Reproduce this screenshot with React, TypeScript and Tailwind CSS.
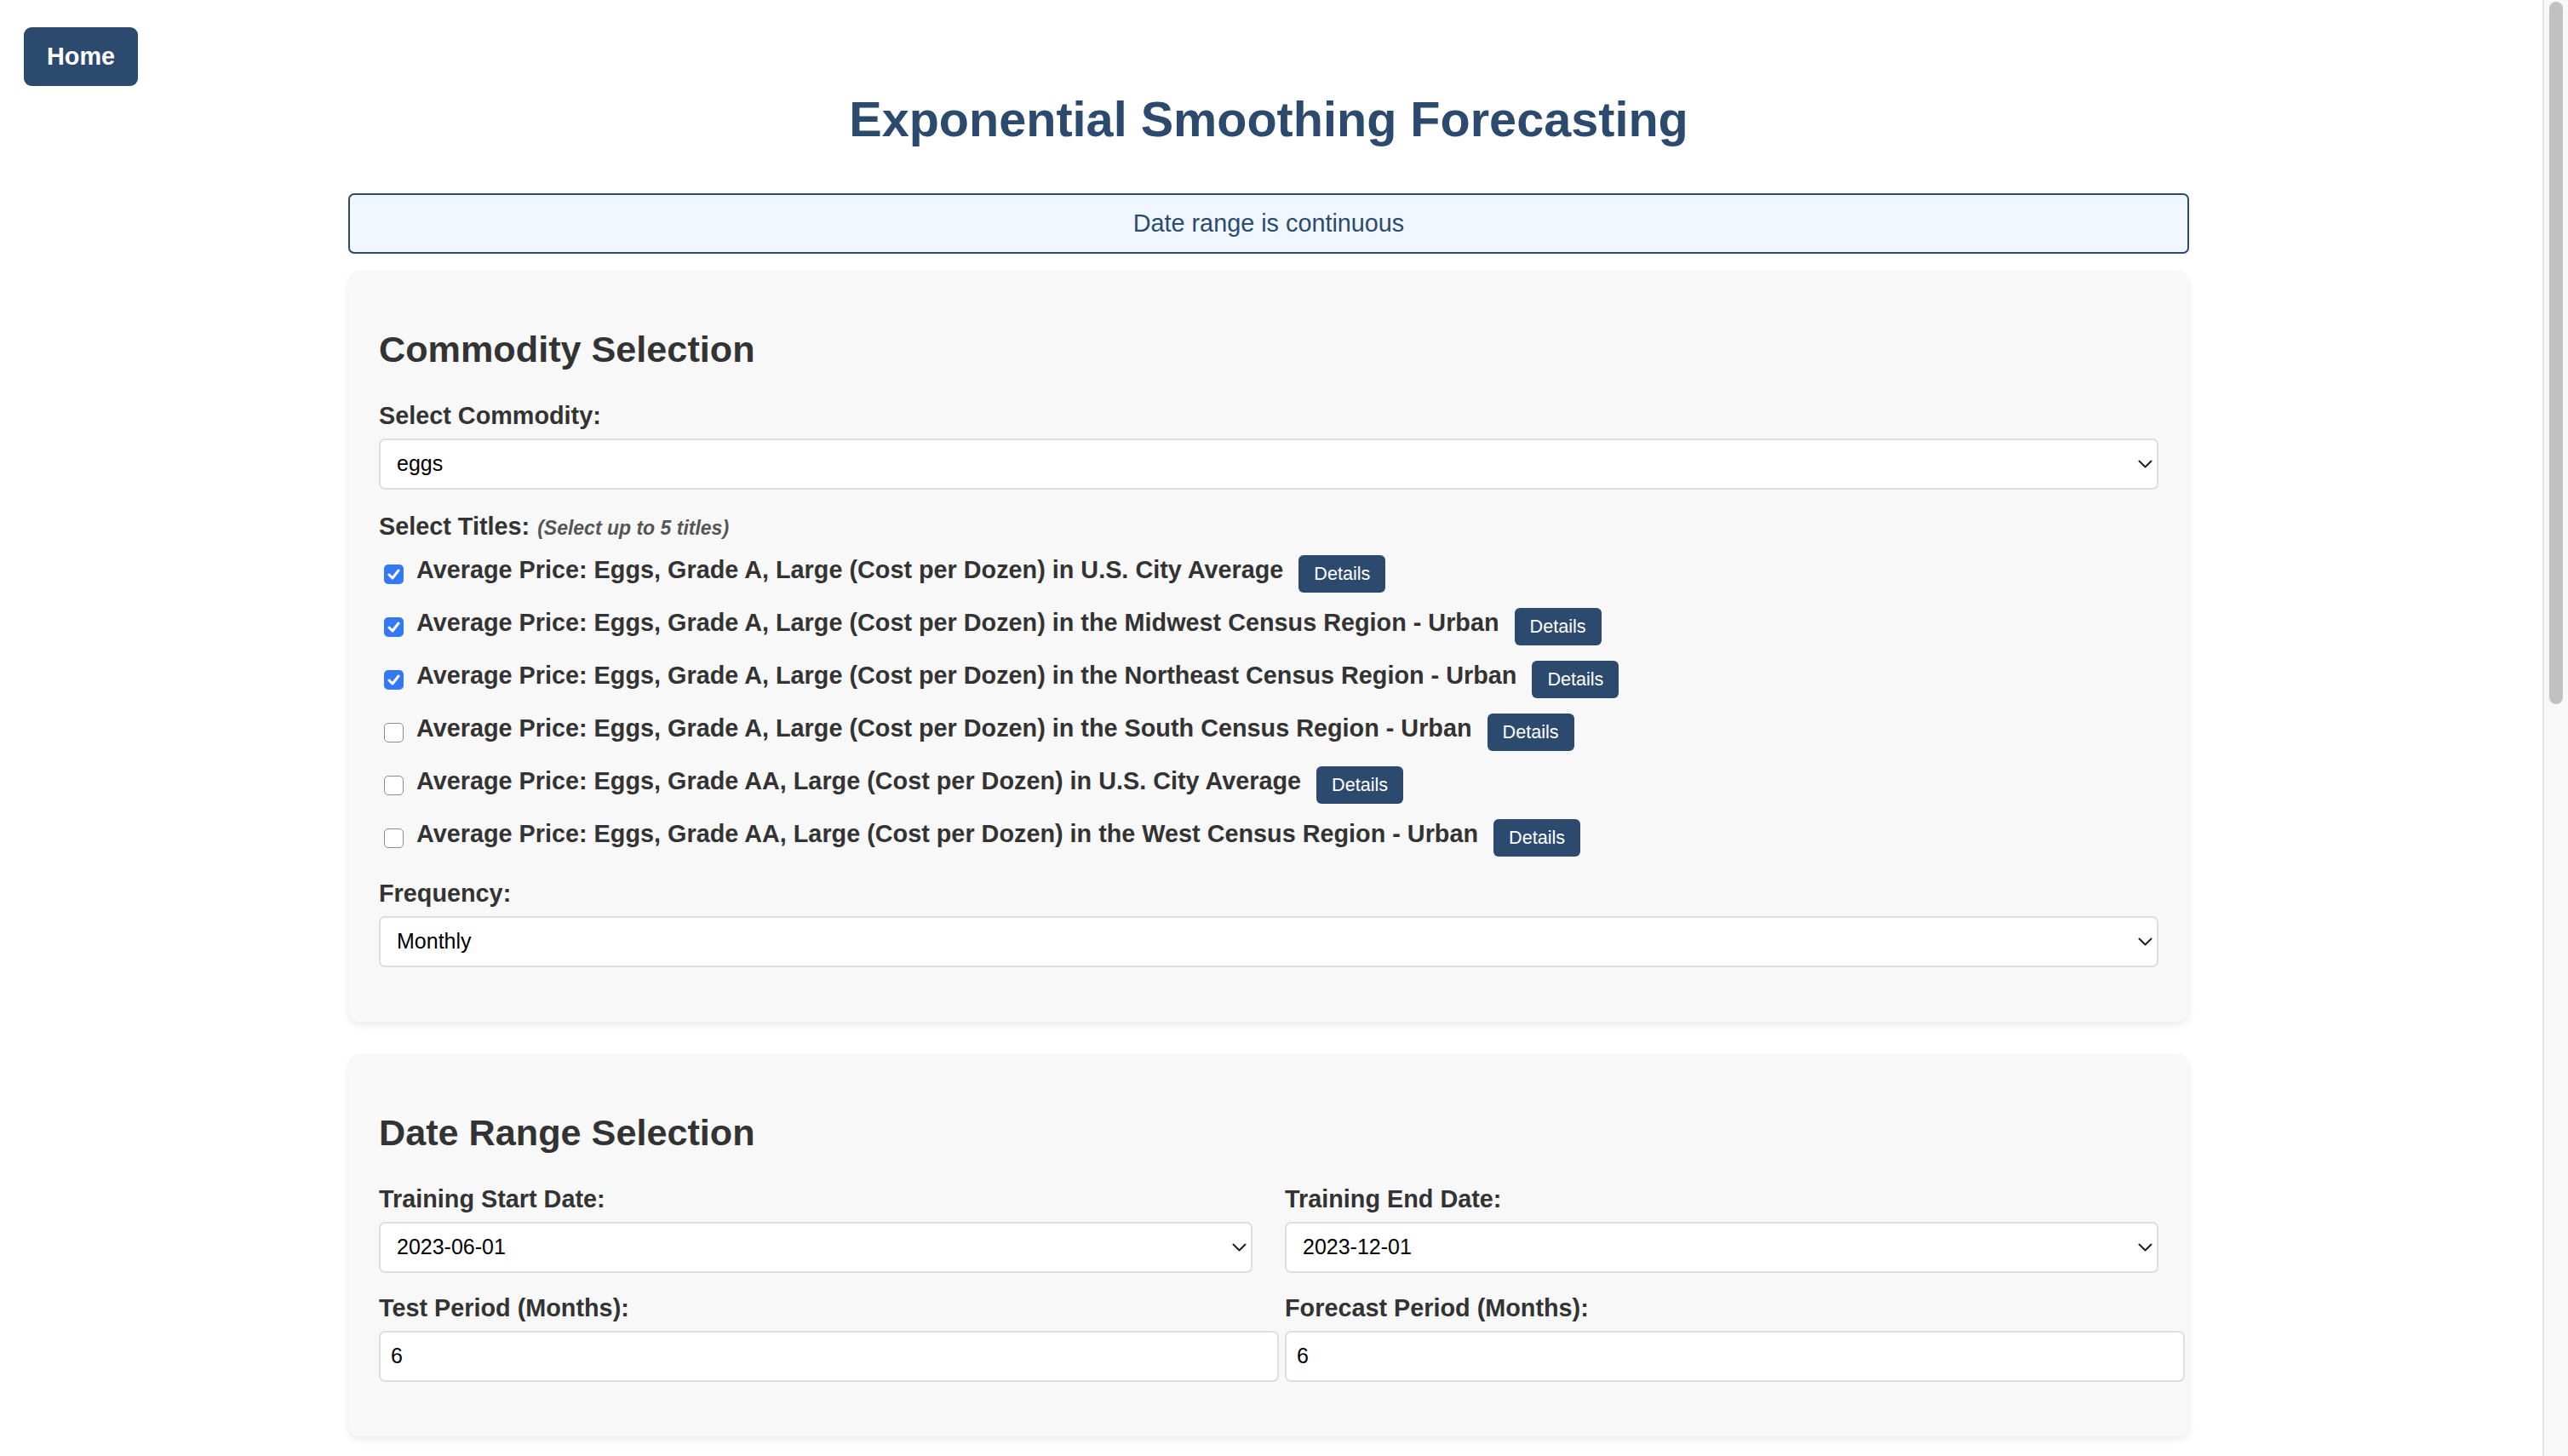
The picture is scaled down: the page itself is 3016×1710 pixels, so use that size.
import React from "react";

function Chevron() {
  return (
    <svg width="17" height="10" viewBox="0 0 17 10" fill="none" className="shrink-0">
      <path d="M1.5 1.5 L8.5 8.5 L15.5 1.5" stroke="#1f1f1f" strokeWidth="2" strokeLinecap="round" strokeLinejoin="round" />
    </svg>
  );
}

function SelectBox({ value }: { value: string }) {
  return (
    <div className="mt-[10px] flex h-[60px] items-center justify-between rounded-[7px] border-2 border-[#dedede] bg-white pl-[19px] pr-[5px] text-[25px] text-black">
      <span>{value}</span>
      <Chevron />
    </div>
  );
}

function InputBox({ value }: { value: string }) {
  return (
    <div className="mt-[10px] flex h-[60px] w-[calc(100%+31px)] items-center rounded-[7px] border-2 border-[#dedede] bg-white pl-[12px] text-[25px] text-black">
      <span>{value}</span>
    </div>
  );
}

function Label({ children }: { children: React.ReactNode }) {
  return <div className="text-[28.8px] font-bold leading-[33px] text-[#333333]">{children}</div>;
}

function Check({ checked }: { checked: boolean }) {
  if (checked) {
    return (
      <span className="ml-[6px] flex h-[23px] w-[23px] shrink-0 items-center justify-center rounded-[5px] bg-[#3478f6]">
        <svg width="15" height="13" viewBox="0 0 15 13" fill="none">
          <path d="M2 7 L6 11 L13 2" stroke="white" strokeWidth="3" strokeLinecap="round" strokeLinejoin="round" />
        </svg>
      </span>
    );
  }
  return <span className="ml-[6px] h-[23px] w-[23px] shrink-0 rounded-[5px] border-[1.5px] border-[#8c8c8c] bg-white" />;
}

const titles: { text: string; checked: boolean }[] = [
  { text: "Average Price: Eggs, Grade A, Large (Cost per Dozen) in U.S. City Average", checked: true },
  { text: "Average Price: Eggs, Grade A, Large (Cost per Dozen) in the Midwest Census Region - Urban", checked: true },
  { text: "Average Price: Eggs, Grade A, Large (Cost per Dozen) in the Northeast Census Region - Urban", checked: true },
  { text: "Average Price: Eggs, Grade A, Large (Cost per Dozen) in the South Census Region - Urban", checked: false },
  { text: "Average Price: Eggs, Grade AA, Large (Cost per Dozen) in U.S. City Average", checked: false },
  { text: "Average Price: Eggs, Grade AA, Large (Cost per Dozen) in the West Census Region - Urban", checked: false },
];

export default function App() {
  return (
    <div className="flex h-[1710px] w-full overflow-hidden bg-white font-['Liberation_Sans',Arial,sans-serif]">
      <div className="min-w-0 flex-1 pr-[6px]">
        <div className="pl-[28px] pt-[32px]">
          <button className="h-[69px] rounded-[9px] bg-[#2c4a6e] px-[27px] text-[28.8px] font-bold leading-[33px] text-white">
            Home
          </button>
        </div>
        <h1 className="mt-[6px] text-center text-[57.6px] font-bold leading-[66px] text-[#2c4a6e]">
          Exponential Smoothing Forecasting
        </h1>
        <div className="mx-auto w-[2162px]">
          <div className="mt-[54px] flex h-[71px] items-center justify-center rounded-[7px] border-2 border-[#2c4a6e] bg-[#f0f7ff] text-[28.8px] text-[#2c4a6e]">
            Date range is continuous
          </div>

          <section className="mt-[20px] rounded-[14px] bg-[#f8f8f8] px-[36px] pb-[64px] pt-[67px] shadow-[0_4px_8px_rgba(0,0,0,0.08)]">
            <h2 className="text-[43.2px] font-bold leading-[50px] text-[#333333]">Commodity Selection</h2>
            <div className="mt-[37px]">
              <Label>Select Commodity:</Label>
              <SelectBox value="eggs" />
            </div>
            <div className="mt-[27px]">
              <Label>
                Select Titles:
                <span className="ml-[9px] text-[23px] font-bold italic text-[#555555]">(Select up to 5 titles)</span>
              </Label>
              <div className="mt-[6px] flex flex-col">
                {titles.map((t) => (
                  <div key={t.text} className="flex h-[62px] items-center">
                    <Check checked={t.checked} />
                    <span className="mb-[9px] ml-[15px] text-[28.8px] font-bold leading-[33px] text-[#333333]">{t.text}</span>
                    <button className="ml-[18px] h-[44px] shrink-0 rounded-[6px] bg-[#2c4a6e] px-[18px] text-[21.6px] text-white">
                      Details
                    </button>
                  </div>
                ))}
              </div>
            </div>
            <div className="mt-[18px]">
              <Label>Frequency:</Label>
              <div className="mt-[1px]">
                <SelectBox value="Monthly" />
              </div>
            </div>
          </section>

          <section className="mt-[38px] rounded-[14px] bg-[#f8f8f8] px-[36px] pb-[64px] pt-[67px] shadow-[0_4px_8px_rgba(0,0,0,0.08)]">
            <h2 className="text-[43.2px] font-bold leading-[50px] text-[#333333]">Date Range Selection</h2>
            <div className="mt-[37px] grid grid-cols-2 gap-x-[38px] gap-y-[25px]">
              <div>
                <Label>Training Start Date:</Label>
                <SelectBox value="2023-06-01" />
              </div>
              <div>
                <Label>Training End Date:</Label>
                <SelectBox value="2023-12-01" />
              </div>
              <div>
                <Label>Test Period (Months):</Label>
                <InputBox value="6" />
              </div>
              <div>
                <Label>Forecast Period (Months):</Label>
                <InputBox value="6" />
              </div>
            </div>
          </section>
        </div>
      </div>
      <div className="w-[30px] shrink-0 border-l-2 border-[#e6e6e6] bg-[#f8f8f8] pl-[6px] pt-[2px]">
        <div className="h-[825px] w-[16px] rounded-full bg-[#c1c1c1]" />
      </div>
    </div>
  );
}
